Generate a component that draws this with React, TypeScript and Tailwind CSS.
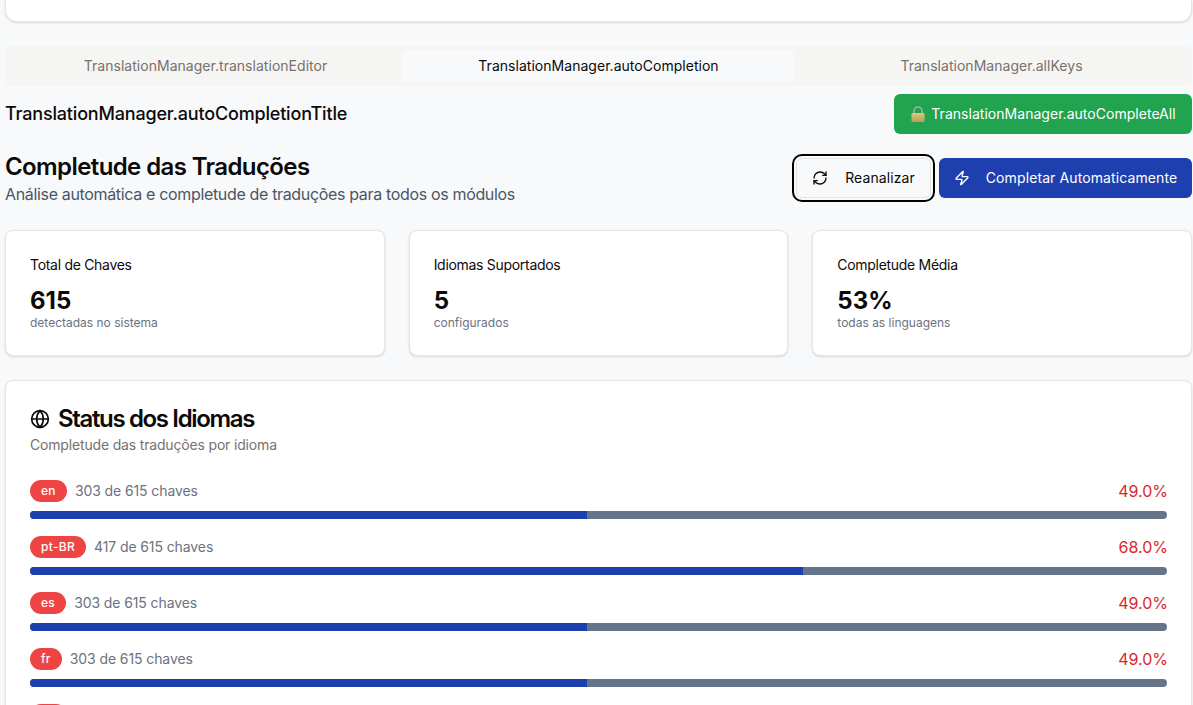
import { Globe, RefreshCw, Zap } from "lucide-react";

const LANGUAGES = [
  { code: "en", done: 303, pct: 49 },
  { code: "pt-BR", done: 417, pct: 68 },
  { code: "es", done: 303, pct: 49 },
  { code: "fr", done: 303, pct: 49 },
  { code: "de", done: 303, pct: 49 },
];

const STATS = [
  { title: "Total de Chaves", value: "615", note: "detectadas no sistema" },
  { title: "Idiomas Suportados", value: "5", note: "configurados" },
  { title: "Completude Média", value: "53%", note: "todas as linguagens" },
];

function LockIcon() {
  return (
    <svg width="14" height="16" viewBox="0 0 14 16" className="shrink-0">
      <defs>
        <linearGradient id="lockBody" x1="0" y1="0" x2="0" y2="1">
          <stop offset="0" stopColor="#d9c97f" />
          <stop offset="1" stopColor="#b59f58" />
        </linearGradient>
      </defs>
      <path d="M3 8V5a4 4 0 0 1 8 0v3" fill="none" stroke="#a8aca8" strokeWidth="1.6" />
      <rect x="0.5" y="7" width="13" height="9" rx="1.2" fill="url(#lockBody)" />
    </svg>
  );
}

export default function App() {
  return (
    <div className="h-[705px] overflow-hidden bg-[#f8f9fb] pl-[5px] pr-px font-['Inter',sans-serif] text-[#0c0a09]">
      <div className="h-[22px] rounded-b-xl border border-t-0 border-[#e7e5e4] bg-white shadow-sm" />

      <div className="mt-6 grid h-10 grid-cols-3 items-center rounded-md bg-[#f5f5f4] p-1 text-sm tracking-[0.03px] text-[#78716c]">
        <div className="text-center">TranslationManager.translationEditor</div>
        <div className="flex h-8 items-center justify-center rounded-sm bg-[#f8f9fb] text-[#0c0a09]">
          TranslationManager.autoCompletion
        </div>
        <div className="text-center">TranslationManager.allKeys</div>
      </div>

      <div className="mt-2 flex items-center justify-between">
        <h2 className="text-lg font-medium tracking-[-0.18px]">TranslationManager.autoCompletionTitle</h2>
        <button className="flex h-10 w-[298px] items-center justify-center rounded-md bg-[#22a34f] pl-px text-sm tracking-[0.03px] text-white">
          <LockIcon />
          <span className="ml-[6px]">TranslationManager.autoCompleteAll</span>
        </button>
      </div>

      <div className="mt-[17px] flex items-center justify-between">
        <div>
          <h1 className="text-2xl font-semibold leading-8 tracking-tight">Completude das Traduções</h1>
          <p className="text-base leading-[22px] tracking-[-0.34px] text-[#4b5563]">
            Análise automática e completude de traduções para todos os módulos
          </p>
        </div>
        <div className="flex items-center gap-2">
          <button className="flex h-10 w-[135px] items-center justify-center gap-[17px] rounded-md border border-[#e7e5e4] bg-[#f8f9fb] text-sm tracking-[0.1px] outline-2 outline-offset-2 outline-black">
            <RefreshCw className="size-4" />
            Reanalizar
          </button>
          <button className="flex h-10 w-[253px] items-center justify-center gap-4 rounded-md bg-[#1e40af] text-sm tracking-[0.1px] text-white">
            <Zap className="size-4" />
            Completar Automaticamente
          </button>
        </div>
      </div>

      <div className="mt-[25px] grid grid-cols-3 gap-6">
        {STATS.map((stat) => (
          <div key={stat.title} className="h-[126px] rounded-lg border border-[#e7e5e4] bg-white p-6 shadow-sm">
            <div className="text-sm leading-5 tracking-[-0.3px]">{stat.title}</div>
            <div className="mt-[10px] text-2xl font-bold leading-8">{stat.value}</div>
            <div className="-mt-[2px] text-xs leading-4 text-[#6b7280]">{stat.note}</div>
          </div>
        ))}
      </div>

      <div className="mt-6 rounded-lg border border-[#e7e5e4] bg-white p-6 shadow-sm">
        <div className="mt-[2px] flex items-center gap-2">
          <Globe className="size-5" />
          <h3 className="text-2xl font-semibold leading-6 tracking-[-1.35px]">Status dos Idiomas</h3>
        </div>
        <p className="mt-1 text-sm leading-5 tracking-[-0.17px] text-[#78716c]">Completude das traduções por idioma</p>
        <div className="mt-[25px] flex flex-col gap-[17px]">
          {LANGUAGES.map((lang) => (
            <div key={lang.code} className="flex flex-col gap-[9px]">
              <div className="flex h-[22px] items-center justify-between">
                <div className="flex items-center gap-2">
                  <span className="rounded-full bg-[#ef4444] px-[11px] py-[3px] text-xs font-medium leading-4 tracking-[0.3px] text-white">
                    {lang.code}
                  </span>
                  <span className="text-sm tracking-[-0.1px] text-[#6b7280]">{lang.done} de 615 chaves</span>
                </div>
                <span className="-mr-px text-base text-[#dc2626]">{lang.pct.toFixed(1)}%</span>
              </div>
              <div className="h-2 overflow-hidden rounded-full bg-[#64748b]">
                <div className="h-full bg-[#1e40af]" style={{ width: `${lang.pct}%` }} />
              </div>
            </div>
          ))}
        </div>
      </div>
    </div>
  );
}
